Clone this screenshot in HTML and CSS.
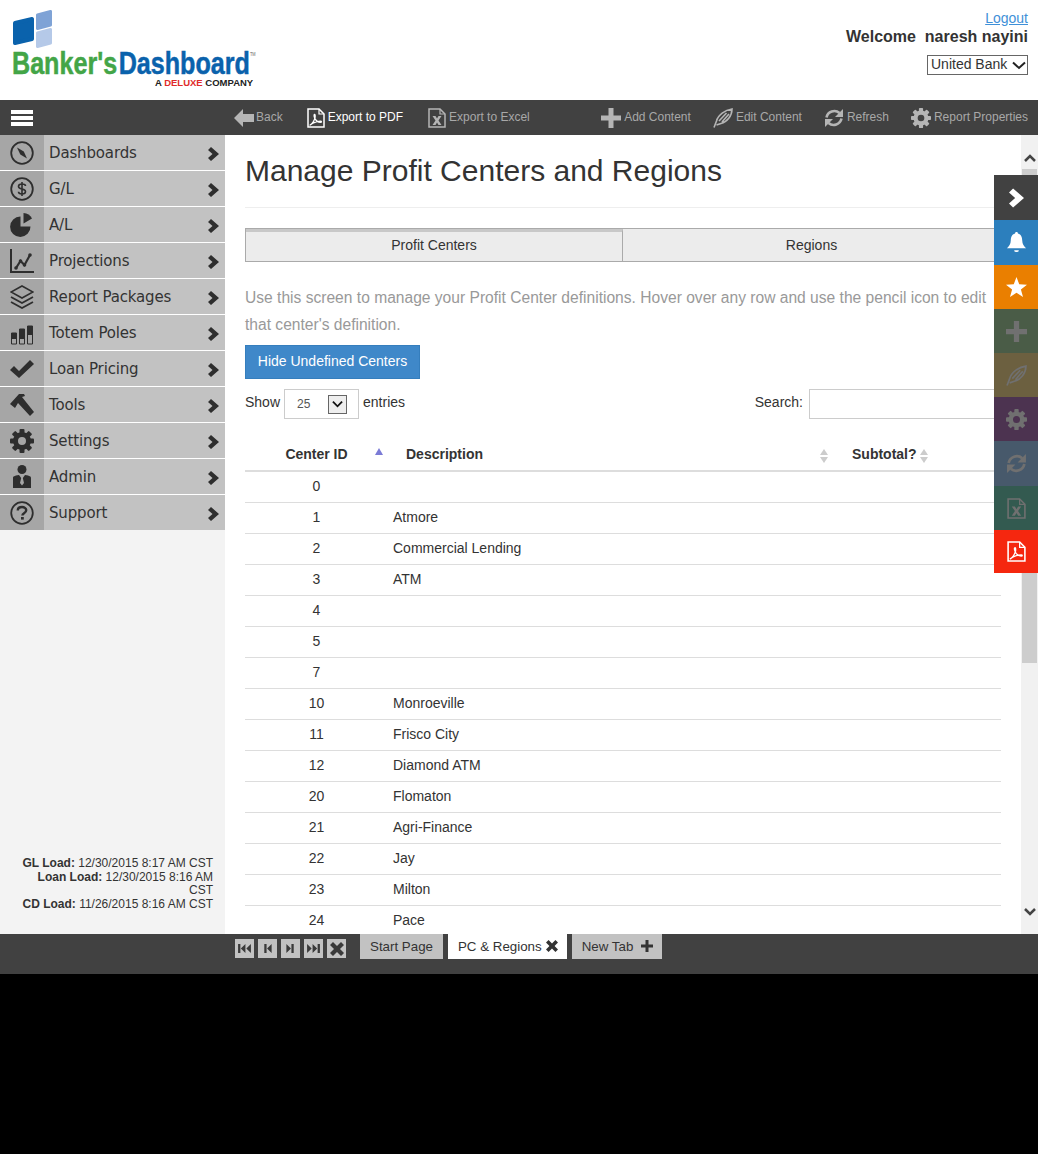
FILE: index.html
```html
<!DOCTYPE html>
<html lang="en">
<head>
    <meta charset="UTF-8">
    <title>Manage Profit Centers and Regions</title>
    <link rel="stylesheet" href="styles.css">
</head>
<body>
    <!-- icon set -->
    <svg class="icon-defs" aria-hidden="true">
        <symbol id="i-arrow-left" viewBox="0 0 20 20"><path d="M0 10 9 1v5h11v8H9v5z"/></symbol>
        <symbol id="i-pdf" viewBox="0 0 18 20"><path d="M1 1h11l5 5v13H1z" fill="none" stroke="currentColor" stroke-width="1.5"/><path d="M12 1v5h5" fill="none" stroke="currentColor" stroke-width="1.2"/><path d="M3 17c2-1 4-4 5-7 .4-1.500.3-4-.6-3.600-.9.400-.2 3 1 5 1.200 2 3 3 5 3 1.500 0 1.500-1.300 0-1.300-2.500 0-5 .8-7.500 2-1.500.7-2.900 2.500-2.900 1.900z" fill="none" stroke="currentColor" stroke-width="1.2"/></symbol>
        <symbol id="i-excel" viewBox="0 0 18 20"><path d="M1 1h11l5 5v13H1z" fill="none" stroke="currentColor" stroke-width="1.500"/><path d="M12 1v5h5" fill="none" stroke="currentColor" stroke-width="1.200"/><path d="M4.500 8h3l1.500 2.600L10.500 8h3l-3 4.500 3 4.500h-3L9 14.400 7.500 17h-3l3-4.500z"/></symbol>
        <symbol id="i-plus" viewBox="0 0 20 20"><path d="M7.500 0h5v7.500H20v5h-7.500V20h-5v-7.500H0v-5h7.500z"/></symbol>
        <symbol id="i-quill" viewBox="0 0 20 20"><path d="M1 19.500 3.500 13C5 7 12 2 19 1c0 7-5 13-11 14.500L3.500 17M6 13l7.500-8M9 14l7-8" fill="none" stroke="currentColor" stroke-width="1.600"/></symbol>
        <symbol id="i-refresh" viewBox="0 0 20 20"><path d="M2.500 9.500A8 8 0 0 1 15.500 5M17.500 10.500A8 8 0 0 1 4.500 15" fill="none" stroke="currentColor" stroke-width="2.600"/><path d="M19 1v8h-8zM1 19v-8h8z"/></symbol>
        <symbol id="i-gear" viewBox="0 0 24 24">
            <circle cx="12" cy="12" r="6.500" fill="none" stroke="currentColor" stroke-width="5"/>
            <g>
                <rect x="9.500" y="0" width="5" height="5" rx="1"/>
                <rect x="9.500" y="19" width="5" height="5" rx="1"/>
                <rect x="0" y="9.500" width="5" height="5" rx="1"/>
                <rect x="19" y="9.500" width="5" height="5" rx="1"/>
            </g>
            <g transform="rotate(45 12 12)">
                <rect x="9.500" y="0" width="5" height="5" rx="1"/>
                <rect x="9.500" y="19" width="5" height="5" rx="1"/>
                <rect x="0" y="9.500" width="5" height="5" rx="1"/>
                <rect x="19" y="9.500" width="5" height="5" rx="1"/>
            </g>
        </symbol>
        <symbol id="i-chevron" viewBox="0 0 11 14"><path d="M3 0 11 7 3 14 0 11 4.500 7 0 3z"/></symbol>
        <symbol id="i-compass" viewBox="0 0 24 24"><circle cx="12" cy="12" r="10.800" fill="none" stroke="currentColor" stroke-width="1.800"/><path d="M7 6.500 13.800 10.500 17 17.500 10.300 13.500z"/></symbol>
        <symbol id="i-dollar" viewBox="0 0 24 24"><circle cx="12" cy="12" r="10.800" fill="none" stroke="currentColor" stroke-width="1.800"/><path d="M15.500 9c0-1.500-1.500-2-3.500-2s-3.500.8-3.500 2.400c0 3.400 7 1.800 7 5.200 0 1.600-1.500 2.400-3.500 2.400s-3.500-.7-3.500-2.200M12 5v14" fill="none" stroke="currentColor" stroke-width="1.600"/></symbol>
        <symbol id="i-pie" viewBox="0 0 24 24"><path d="M10.500 3.500V13.500h10A10.200 10.200 0 1 1 10.500 3.500z"/><path d="M13.500 0v10.500l8.500-5A10 10 0 0 0 13.500 0z"/></symbol>
        <symbol id="i-chart" viewBox="0 0 24 24"><path d="M1 0v23h23" fill="none" stroke="currentColor" stroke-width="2"/><path d="M6 19 10.500 12 14.500 16 20 6" fill="none" stroke="currentColor" stroke-width="2.200"/><circle cx="6" cy="19" r="1.800"/><circle cx="10.500" cy="12" r="1.800"/><circle cx="14.500" cy="16" r="1.800"/><circle cx="20" cy="6" r="1.800"/></symbol>
        <symbol id="i-layers" viewBox="0 0 24 24"><path d="M12 1 23 7 12 13 1 7z" fill="none" stroke="currentColor" stroke-width="1.600"/><path d="M1 12 12 18 23 12M1 17 12 23 23 17" fill="none" stroke="currentColor" stroke-width="1.800"/></symbol>
        <symbol id="i-bars" viewBox="0 0 24 24"><path d="M1.500 12h5v11h-5zM9.500 8h5v15h-5zM17.500 5h5v18h-5z" fill="none" stroke="currentColor" stroke-width="1"/><path d="M1 12h6v6H1zM9 8h6v10H9zM17 5h6v9h-6z"/></symbol>
        <symbol id="i-check" viewBox="0 0 24 24"><path d="M0 13 4 9 9 14 20 3 24 7 9 21z"/></symbol>
        <symbol id="i-hammer" viewBox="0 0 24 24"><path d="M0 11 9 1h5l1 2-3 1 12 15-4 4L8 10 5 15z"/></symbol>
        <symbol id="i-admin" viewBox="0 0 24 24"><circle cx="12" cy="4.500" r="4.500"/><path d="M3 23V13c0-1.500 1-2.200 6-3l2.200 3-1.200 5 2 2.500 2-2.500-1.200-5 2.200-3c5 .8 6 1.500 6 3v10z"/></symbol>
        <symbol id="i-question" viewBox="0 0 24 24"><circle cx="12" cy="12" r="10.800" fill="none" stroke="currentColor" stroke-width="1.800"/><path d="M7.800 9.500C7.800 7 9.800 6 12 6s4.200 1.200 4.200 3.300c0 3-3.800 3-3.800 5.200" fill="none" stroke="currentColor" stroke-width="2.400"/><rect x="11" y="16" width="2.800" height="2.600"/></symbol>
        <symbol id="i-bell" viewBox="0 0 20 22"><path d="M10 0c1 0 1.500.6 1.500 1.500C15 2.500 16 5.500 16 9c0 4 2 6 4 8H0c2-2 4-4 4-8 0-3.500 1-6.500 4.500-7.500C8.500.6 9 0 10 0z"/><path d="M7.500 19h5a2.500 2 0 0 1-5 0z"/></symbol>
        <symbol id="i-star" viewBox="0 0 20 20"><path d="M10 0 12.600 6.900 20 7.300 14.200 11.900 16.200 19 10 15 3.800 19 5.800 11.900 0 7.300 7.400 6.900z"/></symbol>
        <symbol id="i-close" viewBox="0 0 14 14"><path d="M3 0 7 4 11 0 14 3 10 7 14 11 11 14 7 10 3 14 0 11 4 7 0 3z"/></symbol>
        <symbol id="i-first" viewBox="0 0 14 12"><path d="M0 1h2.500v10H0zM8 1v10L3 6zM14 1v10L9 6z"/></symbol>
        <symbol id="i-prev" viewBox="0 0 9 12"><path d="M1 1h2.500v10H1zM9 1v10L4 6z"/></symbol>
        <symbol id="i-next" viewBox="0 0 9 12"><path d="M8 1H5.500v10H8zM0 1v10L5 6z"/></symbol>
        <symbol id="i-last" viewBox="0 0 14 12"><path d="M14 1h-2.500v10H14zM6 1v10l5-5zM0 1v10l5-5z"/></symbol>
    </svg>

    <div class="app">
        <!-- header -->
        <header class="top">
            <div class="logo">
                <svg class="logo-mark" viewBox="0 0 40 39" aria-hidden="true">
                    <path d="M3 13 20 9V29L3 33z" fill="#0a62ac" stroke="#0a62ac" stroke-width="4" stroke-linejoin="round"/>
                    <path d="M25.500 5 38.500 1.500V15L25.500 18.500z" fill="#7fa3d6" stroke="#7fa3d6" stroke-width="3" stroke-linejoin="round"/>
                    <path d="M25.500 23 38.500 19.500V33L25.500 36.500z" fill="#b5c9e8" stroke="#b5c9e8" stroke-width="3" stroke-linejoin="round"/>
                </svg>
                <div class="logo-name"><span class="logo-green">Banker's</span><span class="logo-blue">Dashboard</span><sup class="logo-tm">TM</sup></div>
                <div class="logo-tag">A <span class="logo-red">DELUXE</span> COMPANY</div>
            </div>
            <div class="account">
                <a class="logout" href="#">Logout</a>
                <div class="welcome">Welcome&nbsp; naresh nayini</div>
                <div class="bank-wrap">
                    <select class="bank-select"><option>United Bank</option></select>
                    <svg class="bank-arrow" viewBox="0 0 14 9"><path d="M1 1.500 7 7 13 1.500" fill="none" stroke="currentColor" stroke-width="2"/></svg>
                </div>
            </div>
        </header>

        <!-- toolbar -->
        <nav class="toolbar">
            <div class="burger"><span></span><span></span><span></span></div>
            <div class="tool-group">
                <a class="tool tool-back"><svg class="tool-icon"><use href="#i-arrow-left"/></svg>Back</a>
                <a class="tool tool-on"><svg class="tool-icon tool-doc"><use href="#i-pdf"/></svg>Export to PDF</a>
                <a class="tool tool-excel"><svg class="tool-icon tool-doc"><use href="#i-excel"/></svg>Export to Excel</a>
            </div>
            <div class="tool-group tool-right">
                <a class="tool"><svg class="tool-icon"><use href="#i-plus"/></svg>Add Content</a>
                <a class="tool"><svg class="tool-icon"><use href="#i-quill"/></svg>Edit Content</a>
                <a class="tool"><svg class="tool-icon"><use href="#i-refresh"/></svg>Refresh</a>
                <a class="tool"><svg class="tool-icon"><use href="#i-gear"/></svg>Report Properties</a>
            </div>
        </nav>

        <div class="middle">
            <!-- left menu -->
            <aside class="sidebar">
                <ul class="menu">
                    <li><span class="menu-icon"><svg><use href="#i-compass"/></svg></span><span class="menu-label">Dashboards</span><svg class="menu-arrow"><use href="#i-chevron"/></svg></li>
                    <li><span class="menu-icon"><svg><use href="#i-dollar"/></svg></span><span class="menu-label">G/L</span><svg class="menu-arrow"><use href="#i-chevron"/></svg></li>
                    <li><span class="menu-icon"><svg><use href="#i-pie"/></svg></span><span class="menu-label">A/L</span><svg class="menu-arrow"><use href="#i-chevron"/></svg></li>
                    <li><span class="menu-icon"><svg><use href="#i-chart"/></svg></span><span class="menu-label">Projections</span><svg class="menu-arrow"><use href="#i-chevron"/></svg></li>
                    <li><span class="menu-icon"><svg><use href="#i-layers"/></svg></span><span class="menu-label">Report Packages</span><svg class="menu-arrow"><use href="#i-chevron"/></svg></li>
                    <li><span class="menu-icon"><svg><use href="#i-bars"/></svg></span><span class="menu-label">Totem Poles</span><svg class="menu-arrow"><use href="#i-chevron"/></svg></li>
                    <li><span class="menu-icon"><svg><use href="#i-check"/></svg></span><span class="menu-label">Loan Pricing</span><svg class="menu-arrow"><use href="#i-chevron"/></svg></li>
                    <li><span class="menu-icon"><svg><use href="#i-hammer"/></svg></span><span class="menu-label">Tools</span><svg class="menu-arrow"><use href="#i-chevron"/></svg></li>
                    <li><span class="menu-icon"><svg><use href="#i-gear"/></svg></span><span class="menu-label">Settings</span><svg class="menu-arrow"><use href="#i-chevron"/></svg></li>
                    <li><span class="menu-icon"><svg><use href="#i-admin"/></svg></span><span class="menu-label">Admin</span><svg class="menu-arrow"><use href="#i-chevron"/></svg></li>
                    <li><span class="menu-icon"><svg><use href="#i-question"/></svg></span><span class="menu-label">Support</span><svg class="menu-arrow"><use href="#i-chevron"/></svg></li>
                </ul>
                <div class="load-info">
                    <b>GL Load:</b> 12/30/2015 8:17 AM CST<br>
                    <b>Loan Load:</b> 12/30/2015 8:16 AM CST<br>
                    <b>CD Load:</b> 11/26/2015 8:16 AM CST
                </div>
            </aside>

            <!-- page -->
            <main class="content">
                <h1 class="page-title">Manage Profit Centers and Regions</h1>
                <div class="tabs">
                    <div class="tab tab-active">Profit Centers</div>
                    <div class="tab">Regions</div>
                </div>
                <p class="intro">Use this screen to manage your Profit Center definitions. Hover over any row and use the pencil icon to edit that center's definition.</p>
                <button class="btn-blue">Hide Undefined Centers</button>
                <div class="table-tools">
                    <div class="show-entries">Show
                        <span class="fake-select">25<span class="fake-select-btn"><svg viewBox="0 0 12 8"><path d="M1 1.500 6 6.500 11 1.500" fill="none" stroke="currentColor" stroke-width="2"/></svg></span></span>
                        entries</div>
                    <div class="search-box">Search: <input class="search-input" type="text"></div>
                </div>
                <table class="centers">
                    <thead>
                        <tr>
                            <th class="col-id">Center ID<span class="sort sort-asc"></span></th>
                            <th class="col-desc">Description<span class="sort sort-both"></span></th>
                            <th class="col-sub">Subtotal?<span class="sort sort-both"></span></th>
                        </tr>
                    </thead>
                    <tbody>
                        <tr><td>0</td><td></td><td></td></tr>
                        <tr><td>1</td><td>Atmore</td><td></td></tr>
                        <tr><td>2</td><td>Commercial Lending</td><td></td></tr>
                        <tr><td>3</td><td>ATM</td><td></td></tr>
                        <tr><td>4</td><td></td><td></td></tr>
                        <tr><td>5</td><td></td><td></td></tr>
                        <tr><td>7</td><td></td><td></td></tr>
                        <tr><td>10</td><td>Monroeville</td><td></td></tr>
                        <tr><td>11</td><td>Frisco City</td><td></td></tr>
                        <tr><td>12</td><td>Diamond ATM</td><td></td></tr>
                        <tr><td>20</td><td>Flomaton</td><td></td></tr>
                        <tr><td>21</td><td>Agri-Finance</td><td></td></tr>
                        <tr><td>22</td><td>Jay</td><td></td></tr>
                        <tr><td>23</td><td>Milton</td><td></td></tr>
                        <tr><td>24</td><td>Pace</td><td></td></tr>
                    </tbody>
                </table>
            </main>

            <!-- page scrollbar -->
            <div class="scrollbar">
                <svg class="scroll-arrow" viewBox="0 0 12 8"><path d="M1 7 6 2 11 7" fill="none" stroke="currentColor" stroke-width="2.500"/></svg>
                <div class="scroll-thumb"></div>
                <svg class="scroll-arrow scroll-arrow-down" viewBox="0 0 12 8"><path d="M1 1 6 6 11 1" fill="none" stroke="currentColor" stroke-width="2.500"/></svg>
            </div>

            <!-- slide out quick bar -->
            <div class="rail">
                <div class="rail-item rail-tall rail-dark"><svg class="rail-chevron"><use href="#i-chevron"/></svg></div>
                <div class="rail-item rail-tall rail-blue"><svg class="rail-bell"><use href="#i-bell"/></svg></div>
                <div class="rail-item rail-orange"><svg><use href="#i-star"/></svg></div>
                <div class="rail-item rail-green rail-off"><svg><use href="#i-plus"/></svg></div>
                <div class="rail-item rail-olive rail-off"><svg><use href="#i-quill"/></svg></div>
                <div class="rail-item rail-purple rail-off"><svg><use href="#i-gear"/></svg></div>
                <div class="rail-item rail-tall rail-slate rail-off"><svg><use href="#i-refresh"/></svg></div>
                <div class="rail-item rail-teal rail-off"><svg><use href="#i-excel"/></svg></div>
                <div class="rail-item rail-red"><svg><use href="#i-pdf"/></svg></div>
            </div>
        </div>

        <!-- bottom tabs -->
        <footer class="bottom">
            <div class="pager">
                <span class="pager-btn"><svg class="pager-wide"><use href="#i-first"/></svg></span>
                <span class="pager-btn"><svg class="pager-thin"><use href="#i-prev"/></svg></span>
                <span class="pager-btn"><svg class="pager-thin"><use href="#i-next"/></svg></span>
                <span class="pager-btn"><svg class="pager-wide"><use href="#i-last"/></svg></span>
                <span class="pager-btn"><svg class="pager-x"><use href="#i-close"/></svg></span>
            </div>
            <div class="page-tabs">
                <div class="page-tab">Start Page</div>
                <div class="page-tab page-tab-on">PC &amp; Regions <svg class="page-tab-icon"><use href="#i-close"/></svg></div>
                <div class="page-tab">New Tab <svg class="page-tab-icon page-tab-plus"><use href="#i-plus"/></svg></div>
            </div>
        </footer>
    </div>
</body>
</html>
```

FILE: styles.css
```css
html, body {
    margin: 0;
    padding: 0;
    background-color: #000;
}
body {
    font-family: "Liberation Sans", Arial, sans-serif;
    font-size: 14px;
    color: #333;
}
svg {
    fill: currentColor;
}
.icon-defs {
    display: none;
}
.app {
    width: 1038px;
    height: 974px;
    display: flex;
    flex-direction: column;
    background-color: #fff;
}

/* header */
.top {
    height: 100px;
    flex: none;
    display: flex;
    justify-content: space-between;
    padding: 0 10px 0 12px;
    background-color: #fff;
}
.logo {
    display: flex;
    flex-direction: column;
    width: 250px;
    padding-top: 10px;
}
.logo-mark {
    width: 40px;
    height: 39px;
    display: block;
}
.logo-name {
    font-weight: bold;
    font-size: 32px;
    line-height: 29px;
    white-space: nowrap;
    -webkit-text-stroke: 0.5px;
    transform: scaleX(0.785);
    transform-origin: left center;
}
.logo-green {
    color: #43a547;
}
.logo-blue {
    color: #0a62ac;
    margin-left: 2px;
}
.logo-tm {
    font-size: 5px;
    color: #666;
    vertical-align: top;
    line-height: 10px;
    font-weight: normal;
    -webkit-text-stroke: 0;
}
.logo-tag {
    font-size: 9.500px;
    line-height: 10px;
    font-weight: bold;
    color: #222;
    padding-left: 143px;
    white-space: nowrap;
}
.logo-red {
    color: #e02b2b;
}
.account {
    display: flex;
    flex-direction: column;
    align-items: flex-end;
    padding-top: 10px;
}
.logout {
    color: #3f90d8;
    font-size: 14px;
    line-height: 16px;
    text-decoration: underline;
}
.welcome {
    font-size: 16px;
    font-weight: bold;
    line-height: 19px;
    margin-top: 1px;
}
.bank-wrap {
    position: relative;
    margin-top: 9px;
    height: 20px;
    color: #222;
}
.bank-select {
    display: block;
    box-sizing: border-box;
    width: 101px;
    height: 20px;
    font-family: "Liberation Sans", Arial, sans-serif;
    font-size: 14px;
    line-height: 16px;
    color: #333;
    background-color: #fff;
    border: 1px solid #666;
    border-radius: 0;
    padding: 0 0 2px 3px;
    appearance: none;
}
.bank-arrow {
    position: absolute;
    right: 2px;
    top: 6px;
    width: 14px;
    height: 9px;
    pointer-events: none;
}

/* toolbar */
.toolbar {
    height: 35px;
    flex: none;
    display: flex;
    align-items: center;
    background-color: #414141;
    padding-right: 10px;
}
.burger {
    width: 22px;
    margin-left: 11px;
    margin-right: 201px;
    display: flex;
    flex-direction: column;
    gap: 2px;
    margin-top: 1px;
}
.burger span {
    display: block;
    height: 4px;
    background-color: #fff;
}
.tool-group {
    display: flex;
    align-items: center;
    gap: 24px;
}
.tool-right {
    margin-left: auto;
    gap: 22px;
}
.tool {
    display: flex;
    align-items: center;
    gap: 3px;
    margin-top: -2px;
    font-size: 12px;
    color: #a8a8a8;
    white-space: nowrap;
}
.tool-on {
    color: #fff;
}
.tool-excel {
    margin-left: 1px;
}
.tool-icon {
    width: 20px;
    height: 20px;
    margin-top: 2px;
    color: #b5b5b5;
}
.tool-on .tool-icon {
    color: #fff;
}
.tool-doc {
    width: 18px;
}
.tool-back {
    gap: 2px;
}

/* middle area */
.middle {
    flex: 1;
    display: flex;
    min-height: 0;
    position: relative;
}
.sidebar {
    width: 225px;
    flex: none;
    display: flex;
    flex-direction: column;
    justify-content: space-between;
    background-color: #f3f3f3;
}
.menu {
    list-style: none;
    margin: 0;
    padding: 0;
}
.menu li {
    height: 35px;
    display: flex;
    align-items: center;
    background-color: #c2c2c2;
    border-bottom: 1px solid #fff;
}
.menu li:last-child {
    border-bottom: none;
}
.menu-icon {
    width: 44px;
    height: 100%;
    flex: none;
    display: flex;
    align-items: center;
    justify-content: center;
    background-color: #a6a6a6;
    color: #2e2e2e;
}
.menu-icon svg {
    width: 24px;
    height: 24px;
}
.menu-label {
    flex: 1;
    padding-left: 5px;
    font-family: "DejaVu Sans", sans-serif;
    font-size: 15px;
    letter-spacing: -0.15px;
    color: #333;
}
.menu-arrow {
    width: 11px;
    height: 14px;
    margin-right: 6px;
    margin-top: 2px;
    color: #2e2e2e;
}
.load-info {
    padding: 0 12px 22px 12px;
    text-align: right;
    font-size: 12px;
    line-height: 13.800px;
}

/* page */
.content {
    flex: 1;
    min-width: 0;
    overflow: hidden;
    padding: 0 20px;
    background-color: #fff;
}
.page-title {
    margin: 0;
    padding: 18px 0 18px;
    font-size: 30px;
    line-height: 36px;
    font-weight: normal;
    border-bottom: 1px solid #eee;
}
.tabs {
    display: flex;
    height: 34px;
    margin-top: 20px;
    box-sizing: border-box;
    border: 1px solid #aaa;
    background-color: #ececec;
}
.tab {
    flex: 1;
    text-align: center;
    line-height: 33px;
    font-size: 14px;
}
.tab-active {
    flex: none;
    width: 376px;
    border-right: 1px solid #aaa;
    border-top: 3px solid #c8c8c8;
    line-height: 27px;
}
.intro {
    margin: 22px 0 7px;
    font-size: 15.600px;
    line-height: 27px;
    color: #999;
}
.btn-blue {
    display: block;
    width: 175px;
    height: 34px;
    padding: 0 0 2px;
    font-family: "Liberation Sans", Arial, sans-serif;
    font-size: 14px;
    color: #fff;
    background-color: #3f88c9;
    border: 1px solid #357ebd;
}
.table-tools {
    display: flex;
    justify-content: space-between;
    align-items: center;
    margin-top: 10px;
    height: 30px;
}
.show-entries {
    display: flex;
    align-items: center;
    gap: 4px;
    padding-bottom: 4px;
}
.fake-select {
    display: flex;
    align-items: center;
    justify-content: space-between;
    box-sizing: border-box;
    width: 75px;
    height: 30px;
    padding: 0 11px 0 12px;
    margin-bottom: -4px;
    font-size: 12px;
    color: #555;
    background-color: #fff;
    border: 1px solid #ccc;
}
.fake-select-btn {
    display: flex;
    align-items: center;
    justify-content: center;
    box-sizing: border-box;
    width: 19px;
    height: 19px;
    color: #111;
    background-color: #eee;
    border: 1px solid #666;
}
.fake-select-btn svg {
    width: 11px;
    height: 8px;
}
.search-box {
    display: flex;
    align-items: center;
    gap: 6px;
    padding-bottom: 4px;
}
.search-input {
    box-sizing: border-box;
    width: 192px;
    height: 30px;
    margin-bottom: -4px;
    border: 1px solid #ccc;
    background-color: #fff;
}
.centers {
    width: 756px;
    margin-top: 20px;
    border-collapse: collapse;
    table-layout: fixed;
}
.centers th {
    position: relative;
    height: 29px;
    padding: 0 0 2px;
    font-size: 14px;
    text-align: left;
    border-bottom: 2px solid #ddd;
}
.centers td {
    height: 28px;
    padding: 0 0 2px 5px;
    border-bottom: 1px solid #ddd;
}
.centers td:first-child {
    text-align: center;
    padding: 0 0 2px;
}
.col-id {
    width: 143px;
}
.centers th.col-id {
    text-align: center;
}
.centers th.col-desc {
    width: 446px;
    padding-left: 18px;
}
.sort {
    position: absolute;
    width: 0;
    height: 0;
    border-left: 4.500px solid transparent;
    border-right: 4.500px solid transparent;
}
.sort-asc {
    right: 5px;
    top: 9px;
    border-bottom: 7px solid #7b7bd6;
}
.sort-both {
    top: 10px;
    border-bottom: 6px solid #ccc;
}
.sort-both::after {
    content: "";
    position: absolute;
    left: -4.500px;
    top: 8px;
    border-left: 4.500px solid transparent;
    border-right: 4.500px solid transparent;
    border-top: 6px solid #ccc;
}
.col-desc .sort {
    right: 24px;
}
.col-sub .sort {
    left: 68px;
}

/* scrollbar */
.scrollbar {
    width: 17px;
    flex: none;
    display: flex;
    flex-direction: column;
    align-items: center;
    background-color: #f1f1f1;
    color: #444;
}
.scroll-arrow {
    width: 12px;
    height: 8px;
    margin-top: 19px;
    margin-bottom: 7px;
    flex: none;
}
.scroll-thumb {
    width: 15px;
    height: 494px;
    flex: none;
    background-color: #cdcdcd;
}
.scroll-arrow-down {
    margin-top: auto;
    margin-bottom: 18px;
}

/* quick bar */
.rail {
    position: absolute;
    top: 40px;
    right: 0;
    width: 44px;
    display: flex;
    flex-direction: column;
}
.rail-item {
    height: 44px;
    display: flex;
    align-items: center;
    justify-content: center;
    color: #fff;
}
.rail-tall {
    height: 45px;
}
.rail-item svg {
    width: 21px;
    height: 21px;
}
.rail-item .rail-chevron {
    width: 15px;
    height: 20px;
}
.rail-off {
    color: #707070;
}
.rail-dark { background-color: #414141; }
.rail-blue { background-color: #2c7fbd; }
.rail-orange { background-color: #ea7f00; }
.rail-green { background-color: #4a5c47; }
.rail-olive { background-color: #6c6040; }
.rail-purple { background-color: #4c3350; }
.rail-slate { background-color: #47596b; }
.rail-teal { background-color: #335a50; }
.rail-red { background-color: #f5270f; height: 43px; }

/* bottom tabs */
.bottom {
    height: 40px;
    flex: none;
    display: flex;
    align-items: flex-start;
    background-color: #414141;
    padding-left: 235px;
}
.pager {
    display: flex;
    gap: 4px;
    margin-top: 5px;
}
.pager-btn {
    width: 19px;
    height: 19px;
    display: flex;
    align-items: center;
    justify-content: center;
    background-color: #c2c2c2;
    color: #3a3a3a;
}
.pager-wide {
    width: 13px;
    height: 11px;
}
.pager-thin {
    width: 9px;
    height: 11px;
}
.pager-x {
    width: 14px;
    height: 14px;
}
.page-tabs {
    display: flex;
    gap: 5px;
    margin-left: 14px;
}
.page-tab {
    box-sizing: border-box;
    height: 25px;
    display: flex;
    align-items: center;
    gap: 4px;
    padding: 0 10px 1px;
    font-size: 13.330px;
    color: #333;
    background-color: #c2c2c2;
    white-space: nowrap;
}
.page-tab-on {
    background-color: #fff;
}
.page-tab-icon {
    width: 12px;
    height: 12px;
    color: #333;
    margin-right: -1px;
}
.page-tab-plus {
    margin-left: 4px;
}
```
